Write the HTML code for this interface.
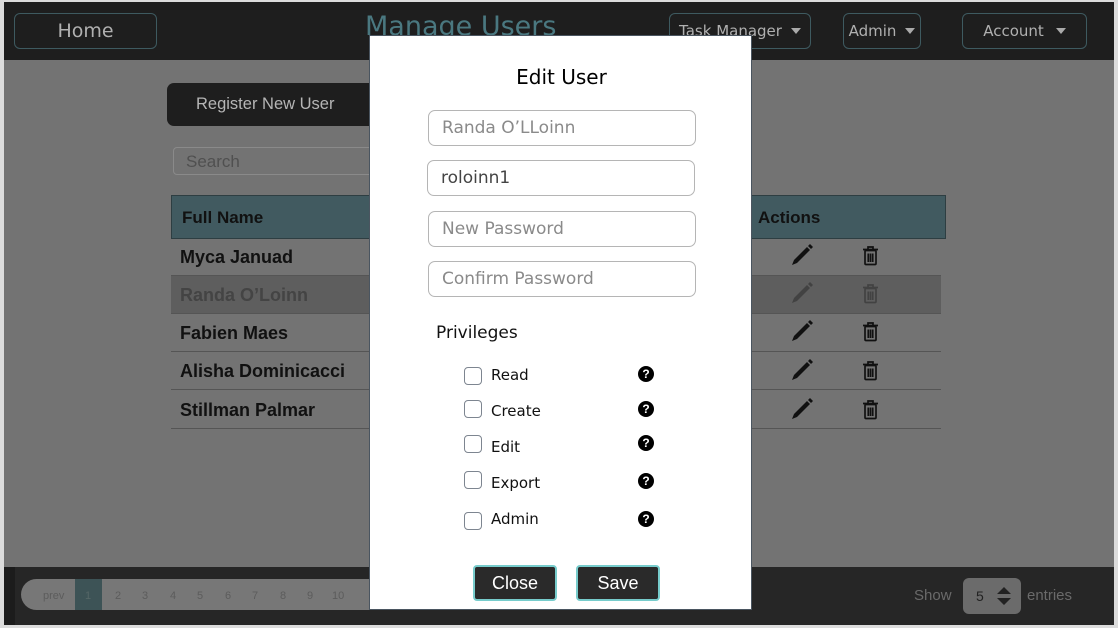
<!DOCTYPE html>
<html><head><meta charset="utf-8"><style>
*{box-sizing:border-box;margin:0;padding:0}
body{width:1118px;height:628px;background:#dcdcdc;position:relative;overflow:hidden;font-family:"Liberation Sans",sans-serif}
.a{position:absolute}
.main{left:4px;top:2px;width:1110px;height:623px;background:#737373}
.hdr{left:4px;top:2px;width:1110px;height:58px;background:#1e1e1e}
.nb{position:absolute;border:1.5px solid #3e5a60;border-radius:6px;color:#b0b0b0;font-family:"DejaVu Sans",sans-serif;font-size:15px;display:flex;align-items:center;justify-content:center;height:36px;top:13px}
.tri{display:inline-block;width:0;height:0;border-left:5px solid transparent;border-right:5px solid transparent;border-top:6px solid #aaa;margin-left:9px}
.row{position:absolute;left:171px;width:770px;height:38px;border-bottom:1.5px solid #555;font-weight:bold;font-size:18px;color:#111;padding:9px 0 0 9px}
.modal{left:369px;top:35px;width:383px;height:575px;background:#fff;border:1px solid #4a5560}
.inp{position:absolute;width:268px;height:36px;border:1.5px solid #b5b5b5;border-radius:7px;color:#8a8a8a;font-family:"DejaVu Sans",sans-serif;font-size:17px;padding:7px 0 0 13px}
.cb{position:absolute;left:94px;width:18px;height:18px;border:1.5px solid #7d8590;border-radius:4px}
.lbl{position:absolute;left:121px;font-family:"DejaVu Sans",sans-serif;font-size:15px;color:#111}
.q{position:absolute;left:268px;width:16px;height:16px;border-radius:50%;background:#000;color:#fff;font-size:12px;font-weight:bold;text-align:center;line-height:16px}
.btn{position:absolute;top:529px;width:84px;height:36px;background:#2a2a2a;border:2px solid #7cc;border-radius:4px;color:#fff;font-size:18px;text-align:center;line-height:32px}
.pg{position:absolute;top:11px;font-size:11px;color:#5c5c5c}
</style></head><body>
<div class="a main"></div>
<div class="a hdr"></div>
<div class="nb" style="left:14px;width:143px;font-size:19px">Home</div>
<div class="a" style="left:365px;top:11px;font-family:'DejaVu Sans',sans-serif;font-size:27px;color:#4a7880">Manage Users</div>
<div class="nb" style="left:669px;width:142px">Task Manager<span class="tri"></span></div>
<div class="nb" style="left:843px;width:78px">Admin<span class="tri"></span></div>
<div class="nb" style="left:962px;width:125px">Account<span class="tri" style="margin-left:12px"></span></div>

<div class="a" style="left:167px;top:83px;width:210px;height:43px;background:#1e1e1e;border-radius:7px;color:#b5b5b5;font-size:16.5px;padding:12px 0 0 29px">Register New User</div>
<div class="a" style="left:173px;top:147px;width:220px;height:28px;border:1.5px solid #8a8a8a;border-radius:4px;color:#505050;font-size:17px;padding:4px 0 0 12px">Search</div>
<div class="a" style="left:171px;top:195px;width:775px;height:44px;background:#415a60;border:1px solid #2e3e42;font-weight:bold;font-size:17px;color:#111;padding:12px 0 0 10px">Full Name<span style="position:absolute;left:586px">Actions</span></div>
<div class="row" style="top:238px">Myca Januad</div>
<div class="row" style="top:276px;background:#5e5e5e;color:#444">Randa O’Loinn</div>
<div class="row" style="top:314px">Fabien Maes</div>
<div class="row" style="top:352px">Alisha Dominicacci</div>
<div class="row" style="top:391px">Stillman Palmar</div>
<svg class="a" style="left:780px;top:238px" width="110" height="195">
<g id="ic"><path d="M12 27 L14 22 L27 9 L30 12 L17 25 Z" fill="#111"/><path d="M28 8 L30 6 L33 9 L31 11Z" fill="#111"/>
<g transform="translate(82,8)" fill="none" stroke="#111" stroke-width="1.7"><path d="M1 3.5 H16 M6 3 V1 H11 V3"/><rect x="3" y="4.5" width="11" height="14" rx="1"/><path d="M6.3 7.5 V16 M8.5 7.5 V16 M10.7 7.5 V16"/></g></g>
<use href="#ic" y="38" opacity="0.35"/><use href="#ic" y="76"/><use href="#ic" y="115"/><use href="#ic" y="154"/>
</svg>

<div class="a" style="left:4px;top:567px;width:1110px;height:58px;background:#262626"></div>
<div class="a" style="left:4px;top:567px;width:11px;height:58px;background:#1c1c1c"></div>
<div class="a" style="left:21px;top:579px;width:360px;height:31px;background:#777;border-radius:16px 0 0 16px">
<span class="pg" style="left:22px">prev</span>
<div class="a" style="left:54px;top:0;width:27px;height:31px;background:#3d5356"></div>
<span class="pg" style="left:64px;color:#566">1</span><span class="pg" style="left:94px">2</span><span class="pg" style="left:121px">3</span><span class="pg" style="left:149px">4</span><span class="pg" style="left:176px">5</span><span class="pg" style="left:204px">6</span><span class="pg" style="left:231px">7</span><span class="pg" style="left:259px">8</span><span class="pg" style="left:286px">9</span><span class="pg" style="left:311px">10</span></div>
<div class="a" style="left:914px;top:587px;font-size:15px;color:#6a6a6a">Show</div>
<div class="a" style="left:963px;top:578px;width:58px;height:36px;background:#6b6b6b;border-radius:6px;font-size:14px;color:#222;padding:10px 0 0 13px">5
<svg class="a" style="left:32px;top:7px" width="18" height="22"><path d="M2 9 L9 2 L16 9Z M2 13 L9 20 L16 13Z" fill="#222"/></svg></div>
<div class="a" style="left:1027px;top:587px;font-size:15px;color:#6a6a6a">entries</div>

<div class="a modal">
<div class="a" style="left:0;width:383px;top:29px;text-align:center;font-family:'DejaVu Sans',sans-serif;font-size:20px;color:#000">Edit User</div>
<div class="inp" style="left:58px;top:74px">Randa O’LLoinn</div>
<div class="inp" style="left:57px;top:124px;color:#444">roloinn1</div>
<div class="inp" style="left:58px;top:175px">New Password</div>
<div class="inp" style="left:58px;top:225px">Confirm Password</div>
<div class="a" style="left:66px;top:287px;font-family:'DejaVu Sans',sans-serif;font-size:17px;color:#111">Privileges</div>
<div class="cb" style="top:331px"></div><div class="lbl" style="top:330px">Read</div><div class="q" style="top:330px">?</div>
<div class="cb" style="top:364px"></div><div class="lbl" style="top:366px">Create</div><div class="q" style="top:365px">?</div>
<div class="cb" style="top:399px"></div><div class="lbl" style="top:402px">Edit</div><div class="q" style="top:399px">?</div>
<div class="cb" style="top:435px"></div><div class="lbl" style="top:438px">Export</div><div class="q" style="top:437px">?</div>
<div class="cb" style="top:476px"></div><div class="lbl" style="top:474px">Admin</div><div class="q" style="top:475px">?</div>
<div class="btn" style="left:103px">Close</div>
<div class="btn" style="left:206px">Save</div>
</div>
</body></html>
